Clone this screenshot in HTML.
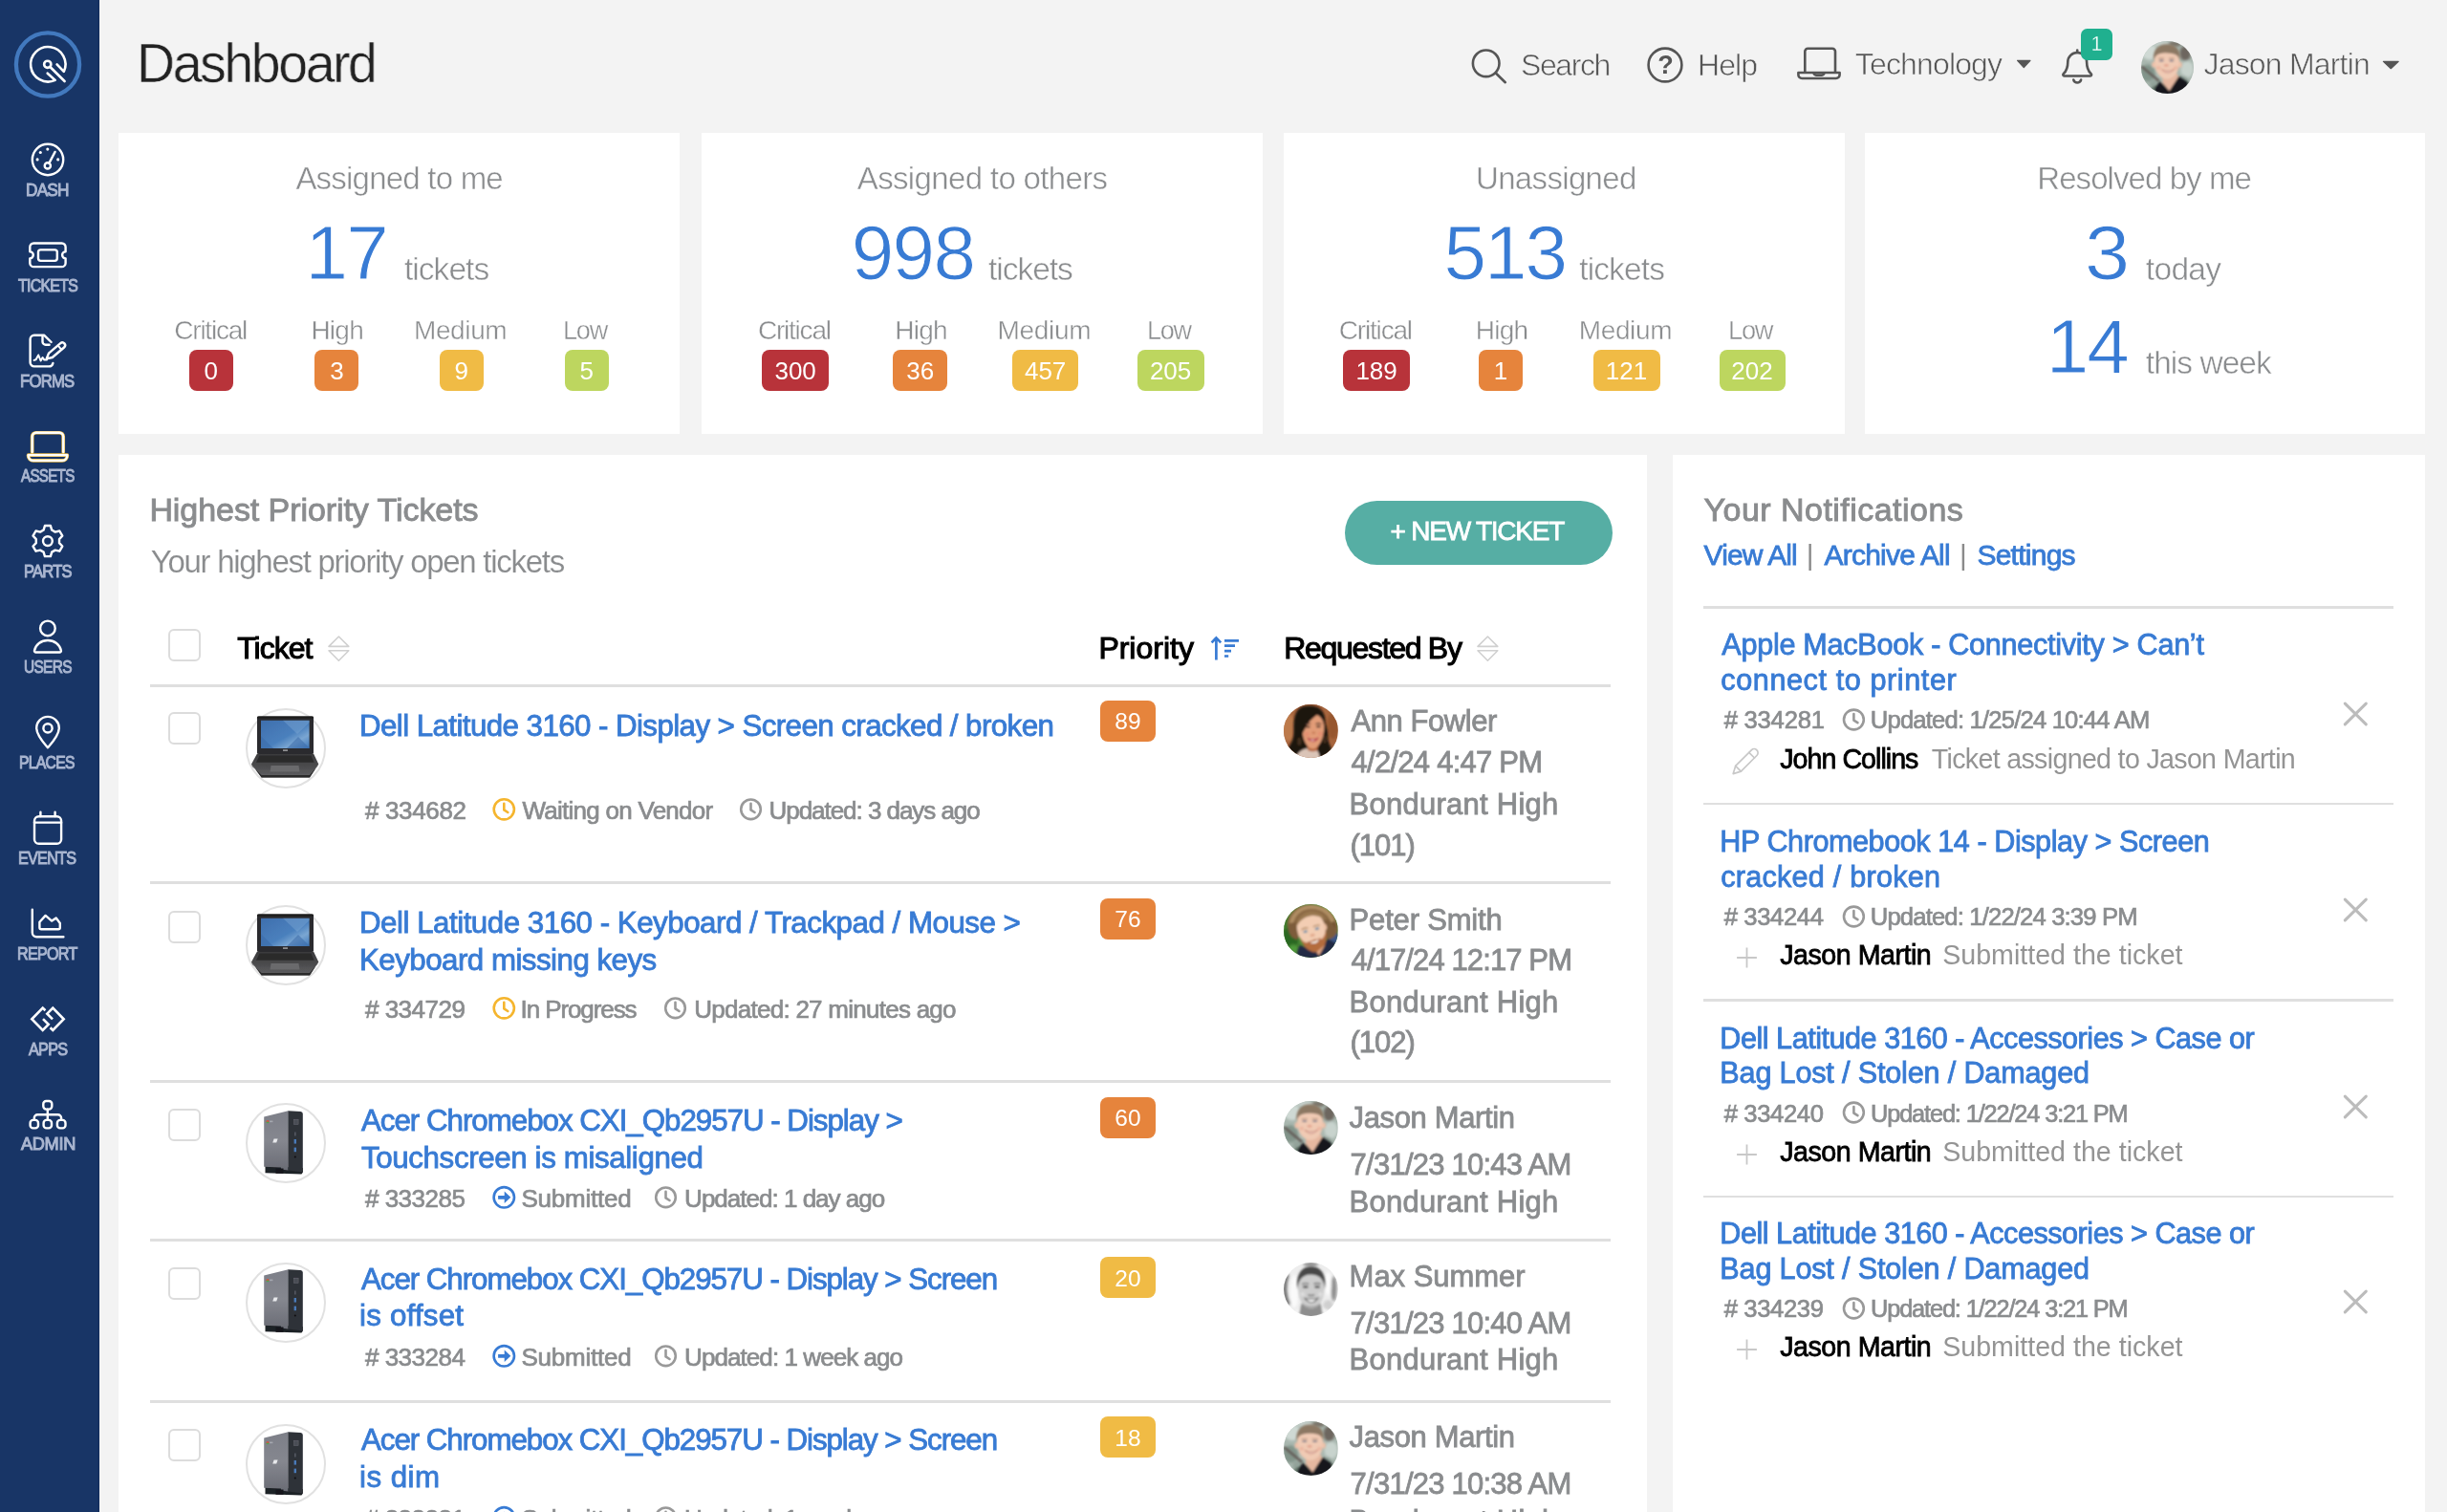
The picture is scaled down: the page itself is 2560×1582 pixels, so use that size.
<!DOCTYPE html>
<html lang="en">
<head>
<meta charset="utf-8">
<title>Dashboard</title>
<style>
html,body{margin:0;padding:0}
body{width:2560px;height:1582px;overflow:hidden;background:#f3f3f3;font-family:"Liberation Sans",sans-serif;position:relative;color:#8b8b8b}
.t{position:absolute;white-space:nowrap;margin:0;padding:0;font-weight:400;text-decoration:none}
.a{position:absolute}
#app{position:absolute;left:0;top:0;width:2560px;height:1582px;overflow:hidden;will-change:transform}
aside,header,section,nav,article,a.nav,div.row,ul,li{position:absolute;display:block;margin:0;padding:0;list-style:none;box-sizing:border-box}
svg{position:absolute;left:0;top:0;overflow:visible}
.sb{-webkit-text-stroke:.027em currentColor}
.lt0{-webkit-text-stroke:.004em #fff}
.sbh{-webkit-text-stroke:.034em currentColor}
.sb2{-webkit-text-stroke:.055em currentColor}
.lt{-webkit-text-stroke:.014em #fff}
.lth{-webkit-text-stroke:.02em #f3f3f3}
.ltb{-webkit-text-stroke:.012em #fff}
.card{background:#fff}
.panel{background:#fff}
.cb{position:absolute;box-sizing:border-box;width:34px;height:34px;border:2px solid #dcdcdc;border-radius:6px;background:#fff}
.hr{position:absolute;height:2.8px;background:#dfdfdf}
.badge{position:absolute;border-radius:8px;color:#fff;text-align:center}
.circ{position:absolute;box-sizing:border-box;border:2.5px solid #e1e1e1;border-radius:50%;background:#fff}
.av{position:absolute;border-radius:50%;overflow:hidden}
</style>
</head>
<body>
<svg width="0" height="0" style="position:absolute"><defs><filter id="b1" x="-20%" y="-20%" width="140%" height="140%"><feGaussianBlur stdDeviation="0.9"/></filter><filter id="b2" x="-20%" y="-20%" width="140%" height="140%"><feGaussianBlur stdDeviation="1.8"/></filter><filter id="b05" x="-20%" y="-20%" width="140%" height="140%"><feGaussianBlur stdDeviation="0.45"/></filter><linearGradient id="scr" x1="0" y1="0" x2="1" y2="1"><stop offset="0" stop-color="#3f6fae"/><stop offset="0.55" stop-color="#4a80bd"/><stop offset="0.75" stop-color="#7aa6d2"/><stop offset="1" stop-color="#3d76b8"/></linearGradient><linearGradient id="cbx" x1="0" y1="0" x2="0" y2="1"><stop offset="0" stop-color="#7d7f88"/><stop offset="0.5" stop-color="#85878f"/><stop offset="1" stop-color="#6a6c75"/></linearGradient><linearGradient id="kb" x1="0" y1="0" x2="0" y2="1"><stop offset="0" stop-color="#3a3a3c"/><stop offset="0.5" stop-color="#4a4a4c"/><stop offset="1" stop-color="#606062"/></linearGradient></defs></svg><div id="app">
<aside style="left:0px;top:0px;width:103.5px;height:1582px;background:#183566;box-shadow:inset -1.5px 0 0 #142f5e;"><a class="nav logo" style="left:0px;top:20px;width:103px;height:100px;"><div class="a" style="left:0px;top:0px;width:103px;height:100px;"><svg width="103" height="100" viewBox="0 20 103 100" ><circle cx="50" cy="67.5" r="33.1" fill="none" stroke="#4279be" stroke-width="4.3"/><g fill="none" stroke="#fff" stroke-width="2.6" stroke-linecap="round" stroke-linejoin="round"><path d="M59.6,67.4 L66.8,74.9 A18.2,18.2 0 1 0 57.7,83.9 L49.7,76.7" stroke-width="2.6"/><circle cx="49.75" cy="67.3" r="3.6" stroke-width="2.6"/><path d="M52.4,70 L67.6,85" stroke-width="2.6"/></g></svg></div></a>
<nav style="left:0px;top:130px;width:103px;height:1100px;"><a class="nav" style="left:0px;top:5px;width:103px;height:99.85px;"><div class="a" style="left:0px;top:0px;width:103px;height:99.85px;"><svg width="103" height="99.85" viewBox="0 135 103 99.85" ><g fill="none" stroke="#fff" stroke-width="2.4" stroke-linecap="round" stroke-linejoin="round"><circle cx="50" cy="167" r="16.2"/><circle cx="49.8" cy="173.4" r="3.1"/><path d="M51.4,170.6 L57.6,158.9"/></g><g fill="#fff"><circle cx="49.8" cy="156.1" r="1.55"/><circle cx="42.3" cy="159.5" r="1.55"/><circle cx="39.1" cy="166.9" r="1.55"/><circle cx="60.7" cy="166.9" r="1.55"/></g></svg></div><span class="t sb2" style="top:54.89px;font-size:18.2px;line-height:18.2px;left:27.35px;transform:scaleX(0.9469);transform-origin:0 0;color:#aab6d0;letter-spacing:-0.82px;">DASH</span></a>
<a class="nav" style="left:0px;top:104.85px;width:103px;height:99.85px;"><div class="a" style="left:0px;top:0px;width:103px;height:99.85px;"><svg width="103" height="99.85" viewBox="0 234.85 103 99.85" ><g fill="none" stroke="#fff" stroke-width="2.4" stroke-linecap="round" stroke-linejoin="round"><path d="M35.3,254.3 H64.6 a4,4 0 0 1 4,4 V263.2 a3.5,3.5 0 0 0 0,7 V275 a4,4 0 0 1 -4,4 H35.3 a4,4 0 0 1 -4,-4 V270.2 a3.5,3.5 0 0 0 0,-7 V258.3 a4,4 0 0 1 4,-4 z"/><rect x="40" y="261.2" width="19.8" height="11.5" rx="2.5"/></g></svg></div><span class="t sb2" style="top:54.89px;font-size:18.2px;line-height:18.2px;left:18.7px;transform:scaleX(0.8738);transform-origin:0 0;color:#aab6d0;letter-spacing:-0.82px;">TICKETS</span></a>
<a class="nav" style="left:0px;top:204.7px;width:103px;height:99.85px;"><div class="a" style="left:0px;top:0px;width:103px;height:99.85px;"><svg width="103" height="99.85" viewBox="0 334.7 103 99.85" ><g fill="none" stroke="#fff" stroke-width="2.4" stroke-linecap="round" stroke-linejoin="round"><path d="M55.4,379.6 a4.4,4.4 0 0 1 -4.4,3.5 H35.8 a4.2,4.2 0 0 1 -4.2,-4.2 V354.7 a4.2,4.2 0 0 1 4.2,-4.2 H46.3 L53.6,357.7"/><path d="M44.5,350.9 V357.2 a3.2,3.2 0 0 0 3.2,3.2 H51.6"/><g transform="translate(48.3,375.4) rotate(-40.5)"><path d="M0.6,0 L6,-2.9 H22.2 a2.9,2.9 0 0 1 0,5.8 H6 Z"/><path d="M18.6,-2.9 V2.9" stroke-width="2"/></g><path d="M35.6,376.6 L37.6,376 L40.2,371.2 L42.6,377.2 L44.6,373.8 L46.4,376.3 H49" stroke-width="2"/></g></svg></div><span class="t sb2" style="top:54.89px;font-size:18.2px;line-height:18.2px;left:21.48px;transform:scaleX(0.9157);transform-origin:0 0;color:#aab6d0;letter-spacing:-0.82px;">FORMS</span></a>
<a class="nav" style="left:0px;top:304.55px;width:103px;height:99.85px;"><div class="a" style="left:0px;top:0px;width:103px;height:99.85px;"><svg width="103" height="99.85" viewBox="0 434.55 103 99.85" ><g fill="none" stroke-linecap="round" stroke-linejoin="round"><g stroke="#f0c04e" stroke-width="3.7"><path d="M33.7,472.6 V456.3 a4,4 0 0 1 4,-4 H62.2 a4,4 0 0 1 4,4 V472.6"/><path d="M29.6,475.7 H70.3 V476.2 a5.2,5.2 0 0 1 -5.2,5.2 H34.8 a5.2,5.2 0 0 1 -5.2,-5.2 Z"/></g><g stroke="#fff" stroke-width="2.3"><path d="M33.7,472.6 V456.3 a4,4 0 0 1 4,-4 H62.2 a4,4 0 0 1 4,4 V472.6"/><path d="M29.6,475.7 H70.3 V476.2 a5.2,5.2 0 0 1 -5.2,5.2 H34.8 a5.2,5.2 0 0 1 -5.2,-5.2 Z"/></g></g></svg></div><span class="t sb2" style="top:54.89px;font-size:18.2px;line-height:18.2px;left:22.2px;transform:scaleX(0.8306);transform-origin:0 0;color:#aab6d0;letter-spacing:-0.82px;">ASSETS</span></a>
<a class="nav" style="left:0px;top:404.4px;width:103px;height:99.85px;"><div class="a" style="left:0px;top:0px;width:103px;height:99.85px;"><svg width="103" height="99.85" viewBox="0 534.4 103 99.85" ><g fill="none" stroke="#fff" stroke-width="2.4" stroke-linecap="round" stroke-linejoin="round"><path d="M45.59,554.98 L46.93,550.47 L52.87,550.47 L54.21,554.98 L57.72,557.01 L62.29,555.91 L65.27,561.06 L62.03,564.47 L62.03,568.53 L65.27,571.94 L62.29,577.09 L57.72,575.99 L54.21,578.02 L52.87,582.53 L46.93,582.53 L45.59,578.02 L42.08,575.99 L37.51,577.09 L34.53,571.94 L37.77,568.53 L37.77,564.47 L34.53,561.06 L37.51,555.91 L42.08,557.01 Z"/><circle cx="49.9" cy="566.5" r="4.9"/></g></svg></div><span class="t sb2" style="top:54.89px;font-size:18.2px;line-height:18.2px;left:24.59px;transform:scaleX(0.9074);transform-origin:0 0;color:#aab6d0;letter-spacing:-0.82px;">PARTS</span></a>
<a class="nav" style="left:0px;top:504.25px;width:103px;height:99.85px;"><div class="a" style="left:0px;top:0px;width:103px;height:99.85px;"><svg width="103" height="99.85" viewBox="0 634.25 103 99.85" ><g fill="none" stroke="#fff" stroke-width="2.4" stroke-linecap="round" stroke-linejoin="round"><circle cx="49.9" cy="657.7" r="7.8"/><path d="M37.6,682.8 H62.3 a1.6,1.6 0 0 0 1.6,-1.9 C62.6,674.6 57,670.2 49.95,670.2 S37.3,674.6 36,680.9 a1.6,1.6 0 0 0 1.6,1.9 Z"/></g></svg></div><span class="t sb2" style="top:54.89px;font-size:18.2px;line-height:18.2px;left:24.65px;transform:scaleX(0.8497);transform-origin:0 0;color:#aab6d0;letter-spacing:-0.82px;">USERS</span></a>
<a class="nav" style="left:0px;top:604.1px;width:103px;height:99.85px;"><div class="a" style="left:0px;top:0px;width:103px;height:99.85px;"><svg width="103" height="99.85" viewBox="0 734.1 103 99.85" ><g fill="none" stroke="#fff" stroke-width="2.4" stroke-linecap="round" stroke-linejoin="round"><path d="M50,782.4 C47,779 38.2,769.5 38.2,761.8 a11.8,11.8 0 0 1 23.6,0 C61.8,769.5 53,779 50,782.4 Z"/><circle cx="50" cy="762" r="4.6"/></g></svg></div><span class="t sb2" style="top:54.89px;font-size:18.2px;line-height:18.2px;left:20.44px;transform:scaleX(0.8625);transform-origin:0 0;color:#aab6d0;letter-spacing:-0.82px;">PLACES</span></a>
<a class="nav" style="left:0px;top:703.95px;width:103px;height:99.85px;"><div class="a" style="left:0px;top:0px;width:103px;height:99.85px;"><svg width="103" height="99.85" viewBox="0 833.95 103 99.85" ><g fill="none" stroke="#fff" stroke-width="2.4" stroke-linecap="round" stroke-linejoin="round"><rect x="36" y="854.2" width="28.1" height="28.5" rx="4.6"/><path d="M36,860.6 H64.1"/><path d="M42.4,849.6 V854"/><path d="M57.6,849.6 V854"/></g></svg></div><span class="t sb2" style="top:54.89px;font-size:18.2px;line-height:18.2px;left:19.11px;transform:scaleX(0.8883);transform-origin:0 0;color:#aab6d0;letter-spacing:-0.82px;">EVENTS</span></a>
<a class="nav" style="left:0px;top:803.8px;width:103px;height:99.85px;"><div class="a" style="left:0px;top:0px;width:103px;height:99.85px;"><svg width="103" height="99.85" viewBox="0 933.8 103 99.85" ><g fill="none" stroke="#fff" stroke-width="2.4" stroke-linecap="round" stroke-linejoin="round"><path d="M33.8,951.6 V975.6 a4.4,4.4 0 0 0 4.4,4.4 H66.4"/><path d="M43.2,972.1 H61 a1.8,1.8 0 0 0 1.8,-1.8 V965.8 L58.7,960.2 L54.2,963.4 L47.6,957.7 L41.4,964.6 V970.3 a1.8,1.8 0 0 0 1.8,1.8 Z"/></g></svg></div><span class="t sb2" style="top:54.89px;font-size:18.2px;line-height:18.2px;left:18.01px;transform:scaleX(0.8868);transform-origin:0 0;color:#aab6d0;letter-spacing:-0.82px;">REPORT</span></a>
<a class="nav" style="left:0px;top:903.65px;width:103px;height:99.85px;"><div class="a" style="left:0px;top:0px;width:103px;height:99.85px;"><svg width="103" height="99.85" viewBox="0 1033.65 103 99.85" ><g fill="none" stroke="#fff" stroke-width="2.6" stroke-linecap="butt" stroke-linejoin="miter"><path d="M47.4,1056.9 L44.7,1054.2 L33.3,1065.9 L44.7,1077.6 L50.7,1071.5 L45,1065.7"/><path d="M52.6,1074.9 L55.3,1077.6 L66.7,1065.9 L55.3,1054.2 L49.3,1060.3 L55,1066.1"/></g></svg></div><span class="t sb2" style="top:54.89px;font-size:18.2px;line-height:18.2px;left:29.5px;transform:scaleX(0.8947);transform-origin:0 0;color:#aab6d0;letter-spacing:-0.82px;">APPS</span></a>
<a class="nav" style="left:0px;top:1003.5px;width:103px;height:99.85px;"><div class="a" style="left:0px;top:0px;width:103px;height:99.85px;"><svg width="103" height="99.85" viewBox="0 1133.5 103 99.85" ><g fill="none" stroke="#fff" stroke-width="2.4" stroke-linecap="round" stroke-linejoin="round"><rect x="45.3" y="1151.5" width="9" height="8.6" rx="3"/><path d="M49.8,1160.1 V1170.2"/><path d="M35.8,1170.2 V1169.3 a3.5,3.5 0 0 1 3.5,-3.5 H60.6 a3.5,3.5 0 0 1 3.5,3.5 V1170.2"/><rect x="31.6" y="1171.4" width="8.4" height="8.5" rx="3"/><rect x="45.6" y="1171.4" width="8.4" height="8.5" rx="3"/><rect x="59.9" y="1171.4" width="8.6" height="8.5" rx="3"/></g></svg></div><span class="t sb2" style="top:54.89px;font-size:18.2px;line-height:18.2px;left:21.9px;color:#aab6d0;letter-spacing:-0.29px;">ADMIN</span></a>
</nav>
</aside>
<header style="left:103px;top:0px;width:2457px;height:139px;"><h1 class="t" style="top:38.43px;font-size:57.5px;line-height:57.5px;left:40.03px;transform:scaleX(0.9668);transform-origin:0 0;color:#222;letter-spacing:-2.59px;-webkit-text-stroke:.01em #f3f3f3;">Dashboard</h1><a class="nav" style="left:1427px;top:40px;width:165px;height:60px;"><div class="a" style="left:0px;top:0px;width:60px;height:60px;"><svg width="60" height="60" viewBox="1530 40 60 60" ><g fill="none" stroke="#555" stroke-width="2.6" stroke-linecap="round" stroke-linejoin="round"><circle cx="1554.7" cy="66.3" r="13.8"/><path d="M1564.6,76.3 L1574.8,86.2"/></g></svg></div><span class="t lth" style="top:11.91px;font-size:32px;line-height:32px;left:61px;color:#555;letter-spacing:-1.42px;">Search</span></a>
<a class="nav" style="left:1612px;top:40px;width:135px;height:60px;"><div class="a" style="left:0px;top:0px;width:60px;height:60px;"><svg width="60" height="60" viewBox="1715 40 60 60" ><g fill="none" stroke="#555" stroke-width="2.6" stroke-linecap="round" stroke-linejoin="round"><circle cx="1742" cy="68" r="17.4"/></g></svg></div><span class="t" style="top:14.74px;font-size:27px;line-height:27px;left:19.2px;font-weight:700;color:#555;">?</span><span class="t lth" style="top:11.91px;font-size:32px;line-height:32px;left:60.9px;color:#555;letter-spacing:-0.87px;">Help</span></a>
<a class="nav" style="left:1769px;top:40px;width:262px;height:60px;"><div class="a" style="left:0px;top:0px;width:70px;height:60px;"><svg width="70" height="60" viewBox="1872 40 70 60" ><g fill="none" stroke="#555" stroke-width="2.6" stroke-linecap="round" stroke-linejoin="round"><path d="M1888.3,75.4 V53.8 a3.1,3.1 0 0 1 3.1,-3.1 H1916.9 a3.1,3.1 0 0 1 3.1,3.1 V75.4"/><path d="M1881.4,76 H1924.6 V78.3 a3.7,3.7 0 0 1 -3.7,3.7 H1885.1 a3.7,3.7 0 0 1 -3.7,-3.7 Z"/><path d="M1897.6,76.2 a2.4,2.4 0 0 0 2.4,2.4 H1906 a2.4,2.4 0 0 0 2.4,-2.4"/></g></svg></div><span class="t lth" style="top:10.51px;font-size:32px;line-height:32px;left:68.8px;color:#555;letter-spacing:-0.85px;">Technology</span><div class="a" style="left:233px;top:15px;width:25px;height:20px;"><svg width="25" height="20" viewBox="2105 55 25 20" ><path d="M2110.6,63.3 H2124 L2117.3,70.6 Z" fill="#555" stroke="#555" stroke-width="1.2" stroke-linejoin="round"/></svg></div></a>
<a class="nav" style="left:2047px;top:25px;width:65px;height:70px;"><div class="a" style="left:0px;top:0px;width:65px;height:70px;"><svg width="65" height="70" viewBox="2150 25 65 70" ><g fill="none" stroke="#555" stroke-width="2.6" stroke-linecap="round" stroke-linejoin="round"><path d="M2173.2,52.6 v2.4"/><path d="M2159.6,79.5 c-1.3,0 -1.7,-1.4 -0.8,-2.3 c2.6,-2.6 4.5,-5 4.5,-12.3 a9.9,9.9 0 0 1 19.8,0 c0,7.3 1.9,9.7 4.5,12.3 c0.9,0.9 0.5,2.3 -0.8,2.3 Z"/><path d="M2169.3,83.6 a4.1,4.1 0 0 0 7.8,0"/></g></svg></div><div class="a" style="left:26.8px;top:4.9px;width:33px;height:33px;background:#20b08f;border-radius:6.5px;"></div><span class="t" style="top:11px;font-size:21.5px;line-height:21.5px;left:37.4px;color:#fff;-webkit-text-stroke:.3px #20b08f;">1</span></a>
<a class="nav" style="left:2132px;top:40px;width:285px;height:62px;"><div class="a av" style="left:4.7px;top:3.4px;width:55px;height:55px;"><svg width="55" height="55" viewBox="0 0 56 56"><rect width="56" height="56" fill="#a9b7af"/><g filter="url(#b2)"><ellipse cx="9" cy="12" rx="9" ry="8" fill="#cfd9d4"/><ellipse cx="7" cy="34" rx="8" ry="9" fill="#82948a"/><ellipse cx="47" cy="13" rx="6" ry="8" fill="#6d665e"/><ellipse cx="49" cy="30" rx="7" ry="9" fill="#c8d3cd"/><ellipse cx="44" cy="42" rx="6" ry="5" fill="#8c9c93"/><ellipse cx="22" cy="3" rx="9" ry="3" fill="#c4cec9"/><ellipse cx="36" cy="3" rx="7" ry="3" fill="#7a746b"/><ellipse cx="16" cy="46" rx="7" ry="5" fill="#93a39a"/></g><g filter="url(#b1)"><path d="M0.5,27 L19,42.5" stroke="#655f5a" stroke-width="2.6"/><path d="M8,56 C9,50 13,47.5 17,47 L40,38 L50,43.5 C53,46 54,50 54,56 Z" fill="#66776c"/><path d="M14,57 C14,51 15,48.5 16.5,47.5 L20,43 L30,52.5 L40,37.5 L49.5,43.5 C50.5,47 50,52 49,57 Z" fill="#14171e"/><path d="M22.5,36 L23,44.5 L30,53 L39.8,38 L38,34 Z" fill="#e6b8a0"/><path d="M14,23 C13.6,14 19,8.5 27.6,8.5 S41.2,14 40.9,23 C40.8,32 35.5,40.4 27.6,40.4 S14.2,32 14,23 Z" fill="#f0cab4"/><ellipse cx="13.2" cy="25.2" rx="1.7" ry="3.1" fill="#eec0a8"/><ellipse cx="41.8" cy="25.2" rx="1.7" ry="3.1" fill="#eec0a8"/><path d="M13.4,21.5 C11.5,9 19,3.2 27.5,3.4 S43,8.5 41.2,21.5 C40.5,16.5 38,12.8 27.4,12.6 S14.6,16 13.4,21.5 Z" fill="#8c7864"/><ellipse cx="21.6" cy="20.8" rx="2.7" ry="1" fill="#7a7888"/><ellipse cx="32.4" cy="20.8" rx="2.7" ry="1" fill="#7a7888"/><path d="M18.5,18.3 h6 M29.5,18.3 h6" stroke="#b08c74" stroke-width="1"/><ellipse cx="26.8" cy="26" rx="2.6" ry="1.5" fill="#e3a590"/><path d="M21.8,30.2 Q28.5,33.6 35.4,30 Q28.5,37.5 21.8,30.2 Z" fill="#f6e6e0" stroke="#c98674" stroke-width="0.9"/><ellipse cx="18.5" cy="28.5" rx="2.6" ry="2" fill="#eab09a" opacity=".7"/><ellipse cx="37" cy="28.5" rx="2.6" ry="2" fill="#eab09a" opacity=".7"/></g></svg></div><span class="t lth" style="top:10.91px;font-size:32px;line-height:32px;left:70.5px;color:#555;letter-spacing:-0.81px;">Jason Martin</span><div class="a" style="left:253px;top:16px;width:25px;height:20px;"><svg width="25" height="20" viewBox="2488 56 25 20" ><path d="M2493.4,64.4 H2509.2 L2501.3,71.7 Z" fill="#555" stroke="#555" stroke-width="1.2" stroke-linejoin="round"/></svg></div></a>
</header>
<section class="cards" style="left:124px;top:139px;width:2413px;height:315px;"><article class="card" style="left:0px;top:0px;width:587px;height:315px;"><h2 class="t lt" style="top:31.37px;font-size:33px;line-height:33px;left:185.4px;color:#8a8c8e;letter-spacing:-0.78px;">Assigned to me</h2><strong class="t ltb" style="top:85.58px;font-size:80px;line-height:80px;left:195.4px;color:#387bd4;letter-spacing:-1.69px;">17</strong><span class="t lt" style="top:125.84px;font-size:33.5px;line-height:33.5px;left:299px;color:#8a8c8e;letter-spacing:-0.96px;">tickets</span><span class="t lt" style="top:192.5px;font-size:28px;line-height:28px;left:58.3px;color:#8a8c8e;letter-spacing:-1.23px;">Critical</span><span class="badge" style="left:74.2px;top:227.3px;width:45.4px;height:42.5px;background:#b8333a;border-radius:8px;"><span class="t" style="top:8.59px;font-size:26px;line-height:26px;left:15.2px;color:#fff;">0</span></span>
<span class="t lt" style="top:192.5px;font-size:28px;line-height:28px;left:201.4px;color:#8a8c8e;letter-spacing:-0.74px;">High</span><span class="badge" style="left:205.4px;top:227.3px;width:45.8px;height:42.5px;background:#e6843c;border-radius:8px;"><span class="t" style="top:8.59px;font-size:26px;line-height:26px;left:15.9px;color:#fff;">3</span></span>
<span class="t lt" style="top:192.5px;font-size:28px;line-height:28px;left:309px;color:#8a8c8e;letter-spacing:-0.39px;">Medium</span><span class="badge" style="left:336px;top:227.3px;width:45.9px;height:42.5px;background:#f0bb45;border-radius:8px;"><span class="t" style="top:8.59px;font-size:26px;line-height:26px;left:15.45px;color:#fff;">9</span></span>
<span class="t lt" style="top:192.5px;font-size:28px;line-height:28px;left:465.07px;transform:scaleX(0.9659);transform-origin:0 0;color:#8a8c8e;letter-spacing:-1.26px;">Low</span><span class="badge" style="left:467px;top:227.3px;width:46px;height:42.5px;background:#bdd65f;border-radius:8px;"><span class="t" style="top:8.59px;font-size:26px;line-height:26px;left:15.5px;color:#fff;">5</span></span>
</article>
<article class="card" style="left:610px;top:0px;width:587px;height:315px;"><h2 class="t lt" style="top:31.37px;font-size:33px;line-height:33px;left:162.8px;color:#8a8c8e;letter-spacing:-0.65px;">Assigned to others</h2><strong class="t ltb" style="top:85.58px;font-size:80px;line-height:80px;left:156.8px;color:#387bd4;letter-spacing:-1.69px;">998</strong><span class="t lt" style="top:125.84px;font-size:33.5px;line-height:33.5px;left:299.9px;color:#8a8c8e;letter-spacing:-1px;">tickets</span><span class="t lt" style="top:192.5px;font-size:28px;line-height:28px;left:59px;color:#8a8c8e;letter-spacing:-1.23px;">Critical</span><span class="badge" style="left:63px;top:227.3px;width:69.8px;height:42.5px;background:#b8333a;border-radius:8px;"><span class="t" style="top:8.59px;font-size:26px;line-height:26px;left:13.44px;color:#fff;">300</span></span>
<span class="t lt" style="top:192.5px;font-size:28px;line-height:28px;left:202.3px;color:#8a8c8e;letter-spacing:-0.74px;">High</span><span class="badge" style="left:200.2px;top:227.3px;width:56.8px;height:42.5px;background:#e6843c;border-radius:8px;"><span class="t" style="top:8.59px;font-size:26px;line-height:26px;left:14.17px;color:#fff;">36</span></span>
<span class="t lt" style="top:192.5px;font-size:28px;line-height:28px;left:309.5px;color:#8a8c8e;letter-spacing:-0.31px;">Medium</span><span class="badge" style="left:324.8px;top:227.3px;width:69.2px;height:42.5px;background:#f0bb45;border-radius:8px;"><span class="t" style="top:8.59px;font-size:26px;line-height:26px;left:13.14px;color:#fff;">457</span></span>
<span class="t lt" style="top:192.5px;font-size:28px;line-height:28px;left:465.77px;transform:scaleX(0.9638);transform-origin:0 0;color:#8a8c8e;letter-spacing:-1.26px;">Low</span><span class="badge" style="left:456px;top:227.3px;width:69.7px;height:42.5px;background:#bdd65f;border-radius:8px;"><span class="t" style="top:8.59px;font-size:26px;line-height:26px;left:12.89px;color:#fff;">205</span></span>
</article>
<article class="card" style="left:1219px;top:0px;width:587px;height:315px;"><h2 class="t lt" style="top:31.37px;font-size:33px;line-height:33px;left:201px;color:#8a8c8e;letter-spacing:-0.66px;">Unassigned</h2><strong class="t ltb" style="top:85.58px;font-size:80px;line-height:80px;left:167.5px;color:#387bd4;letter-spacing:-1.94px;">513</strong><span class="t lt" style="top:125.84px;font-size:33.5px;line-height:33.5px;left:309.2px;color:#8a8c8e;letter-spacing:-0.86px;">tickets</span><span class="t lt" style="top:192.5px;font-size:28px;line-height:28px;left:57.8px;color:#8a8c8e;letter-spacing:-1.18px;">Critical</span><span class="badge" style="left:62.4px;top:227.3px;width:69.9px;height:42.5px;background:#b8333a;border-radius:8px;"><span class="t" style="top:8.59px;font-size:26px;line-height:26px;left:12.99px;color:#fff;">189</span></span>
<span class="t lt" style="top:192.5px;font-size:28px;line-height:28px;left:200.7px;color:#8a8c8e;letter-spacing:-0.74px;">High</span><span class="badge" style="left:204.2px;top:227.3px;width:46.2px;height:42.5px;background:#e6843c;border-radius:8px;"><span class="t" style="top:8.59px;font-size:26px;line-height:26px;left:15.6px;color:#fff;">1</span></span>
<span class="t lt" style="top:192.5px;font-size:28px;line-height:28px;left:308.7px;color:#8a8c8e;letter-spacing:-0.35px;">Medium</span><span class="badge" style="left:323.8px;top:227.3px;width:69.9px;height:42.5px;background:#f0bb45;border-radius:8px;"><span class="t" style="top:8.59px;font-size:26px;line-height:26px;left:12.99px;color:#fff;">121</span></span>
<span class="t lt" style="top:192.5px;font-size:28px;line-height:28px;left:464.56px;transform:scaleX(0.9722);transform-origin:0 0;color:#8a8c8e;letter-spacing:-1.26px;">Low</span><span class="badge" style="left:455.5px;top:227.3px;width:69.4px;height:42.5px;background:#bdd65f;border-radius:8px;"><span class="t" style="top:8.59px;font-size:26px;line-height:26px;left:12.74px;color:#fff;">202</span></span>
</article>
<article class="card" style="left:1827px;top:0px;width:586px;height:315px;"><h2 class="t lt" style="top:31.37px;font-size:33px;line-height:33px;left:180.3px;color:#8a8c8e;letter-spacing:-0.93px;">Resolved by me</h2><strong class="t ltb" style="top:85.58px;font-size:80px;line-height:80px;left:230.33px;transform:scaleX(1.0579);transform-origin:0 0;color:#387bd4;">3</strong><span class="t lt" style="top:125.84px;font-size:33.5px;line-height:33.5px;left:293.8px;color:#8a8c8e;letter-spacing:-0.68px;">today</span><strong class="t ltb" style="top:184.08px;font-size:80px;line-height:80px;left:189.8px;color:#387bd4;letter-spacing:-1.99px;">14</strong><span class="t lt" style="top:224.24px;font-size:33.5px;line-height:33.5px;left:293.8px;color:#8a8c8e;letter-spacing:-0.96px;">this week</span></article>
</section>
<section class="panel" style="left:124px;top:475.5px;width:1599px;height:1110px;"><h2 class="t sb" style="top:40.32px;font-size:34px;line-height:34px;left:32.4px;color:#8a8c8e;letter-spacing:-0.07px;">Highest Priority Tickets</h2><p class="t lt0" style="top:95.67px;font-size:33px;line-height:33px;left:33.7px;color:#8a8c8e;letter-spacing:-1.28px;">Your highest priority open tickets</p><a class="nav" style="left:1283.4px;top:48.6px;width:279.6px;height:66.8px;background:#56aea4;border-radius:34px;"><span class="t sb" style="top:18.3px;font-size:28px;line-height:28px;left:47.2px;color:#fff;letter-spacing:-1.23px;">+ NEW TICKET</span></a>
<div class="row" style="left:33px;top:164.5px;width:1528px;height:79px;"><span class="a cb" style="left:18.5px;top:18.4px;"></span><span class="t sbh" style="top:22.21px;font-size:32px;line-height:32px;left:91.2px;color:#000;letter-spacing:-0.99px;">Ticket</span><div class="a" style="left:185.8px;top:25px;width:23px;height:27px;"><svg width="23" height="27" viewBox="342.8 665 23 27" ><g fill="none" stroke="#d0d0d0" stroke-width="1.6" stroke-linejoin="round"><path d="M354.2,666 L364.6,676.4 H343.8 Z"/><path d="M354.2,691.2 L364.6,680.8 H343.8 Z"/></g></svg></div><span class="t sbh" style="top:22.21px;font-size:32px;line-height:32px;left:992.4px;color:#000;letter-spacing:-0.01px;">Priority</span><div class="a" style="left:1109px;top:24px;width:31px;height:29px;"><svg width="31" height="29" viewBox="1266 664 31 29" ><g fill="none" stroke="#387bd4" stroke-width="2.7" stroke-linecap="butt" stroke-linejoin="miter"><path d="M1272.4,690.6 V667.6 M1267.6,672.4 L1272.4,667.4 L1277.2,672.4"/><path d="M1281,670.3 H1296 M1281,675.7 H1292 M1281,681.1 H1288 M1281,686.5 H1285.2"/></g></svg></div><span class="t sbh" style="top:22.21px;font-size:32px;line-height:32px;left:1186.2px;color:#000;letter-spacing:-1.3px;">Requested By</span><div class="a" style="left:1388.1px;top:24.8px;width:23px;height:27px;"><svg width="23" height="27" viewBox="1545.1 664.8 23 27" ><g fill="none" stroke="#d0d0d0" stroke-width="1.6" stroke-linejoin="round"><path d="M1556.5,665.8 L1566.9,676.2 H1546.1 Z"/><path d="M1556.5,691 L1566.9,680.6 H1546.1 Z"/></g></svg></div><div class="a hr" style="left:0px;top:76.3px;width:1528px;"></div></div>
<div class="row" style="left:33px;top:243.3px;width:1528px;height:205.9px;"><span class="a cb" style="left:18.5px;top:26.5px;"></span><div class="a circ" style="left:99.8px;top:22.2px;width:84px;height:84px;"><svg width="84" height="84" viewBox="0 0 84 84" style="left:-2.5px;top:-2.5px"><g filter="url(#b05)"><path d="M13,48.6 L7,59.6 L17.6,73.4 H68 L77.3,59.6 L72,48.6 Z" fill="url(#kb)"/><path d="M7,59.6 L17.6,73.4 H68 L77.3,59.6 L76,62 L68,71 H17.6 L8,62 Z" fill="#2a2a2b"/><path d="M15.5,50.4 H69.5 L72.6,57.8 H12 Z" fill="#2a2a2c"/><path d="M27.5,61 H56.5 L57.5,67.5 H26.5 Z" fill="#6a6a6c"/><rect x="13" y="9.5" width="59" height="39.6" rx="1.8" fill="#2c2c2e"/><rect x="13" y="9.5" width="59" height="2.2" rx="1" fill="#1c1c1e"/><rect x="17" y="13.8" width="50.6" height="29.2" fill="url(#scr)"/><path d="M17,30 L30,43 H17 Z M44,43 L56,31 L67.6,42.5 V43 Z" fill="#3a6aa8" opacity=".55"/><path d="M40,13.8 L55,28 L67.6,16 V13.8 Z" fill="#8ab2da" opacity=".35"/><rect x="40" y="44.3" width="5" height="1.6" fill="#9a9a9c"/></g></svg></div><a class="t sb" style="top:20.85px;font-size:31.3px;line-height:39px;left:219px;color:#387bd4;letter-spacing:-0.58px;">Dell Latitude 3160 - Display &gt; Screen cracked / broken</a><span class="t sb" style="top:116.59px;font-size:26px;line-height:26px;left:225px;color:#8a8c8e;letter-spacing:-0.35px;"># 334682</span><div class="a" style="left:357px;top:115.6px;width:27px;height:27px;"><svg width="27" height="27" viewBox="514 834.4 27 27" ><g fill="none" stroke="#f5b52e" stroke-width="2.6" stroke-linecap="round" stroke-linejoin="round"><circle cx="527.3" cy="847.2" r="10.6"/><path d="M527.3,841.2 V847.8 L531.3,850.4"/></g></svg></div><span class="t sb" style="top:116.59px;font-size:26px;line-height:26px;left:389.5px;color:#8a8c8e;letter-spacing:-0.74px;">Waiting on Vendor</span><div class="a" style="left:616.8px;top:115.6px;width:27px;height:27px;"><svg width="27" height="27" viewBox="773.8 834.4 27 27" ><g fill="none" stroke="#999" stroke-width="2.6" stroke-linecap="round" stroke-linejoin="round"><circle cx="785.3" cy="847.2" r="10.3"/><path d="M785.3,841.2 V847.8 L789.3,850.4"/></g></svg></div><span class="t sb" style="top:116.59px;font-size:26px;line-height:26px;left:647.5px;color:#8a8c8e;letter-spacing:-1.04px;">Updated: 3 days ago</span><span class="badge" style="left:994.3px;top:14.4px;width:57.7px;height:42.4px;background:#e6843c;border-radius:8px;"><span class="t" style="top:10.06px;font-size:24.5px;line-height:24.5px;left:15.04px;color:#fff;">89</span></span>
<div class="a av" style="left:1186.2px;top:18.1px;width:56.5px;height:56.5px;"><svg width="56.5" height="56.5" viewBox="0 0 56 56"><rect width="56" height="56" fill="#a8663e"/><g filter="url(#b2)"><ellipse cx="5" cy="24" rx="7" ry="14" fill="#bd7a4c"/><ellipse cx="51" cy="22" rx="6" ry="14" fill="#96562f"/><ellipse cx="28" cy="1" rx="18" ry="3" fill="#9a5a36"/><ellipse cx="6" cy="46" rx="5" ry="5" fill="#9c5c38"/></g><g filter="url(#b1)"><path d="M19,2.4 C27,0.5 36,1.4 40,7 C43.5,12 43,18 44,28 C44.5,36 47,40 49.5,46 L46,52 L38,57 H12 L4,48 C5,42 10,40 10.3,30 C10.5,22 9,7 19,2.4 Z" fill="#1e1310"/><path d="M13,57 C13.5,49 20,45.6 27,45.4 S37,48 37.5,57 Z" fill="#dac4b7"/><path d="M24,38 H36 L35,47.5 Q30,50 25,47.5 Z" fill="#b5683f"/><path d="M19.4,27 C19.4,17 24,10.5 31,10.5 S42,16.5 41.8,25 C41.6,35 36.5,46 30.2,46 S19.4,36 19.4,27 Z" fill="#e29c77"/><path d="M18,33 C14,22 18,7 30,5 C38,4 43,9 42.5,18 C41,12.5 38.5,9 37.8,8.5 C33,12 27.5,16 24.5,21 C22,25 20,29 18,33 Z" fill="#1e1310"/><path d="M41,17 C43,22 43.5,30 42,38 L46,42 C46.5,32 45,20 41,17 Z" fill="#1e1310"/><path d="M24.6,35 Q30.5,38 36,34.6 Q30.5,42 24.6,35 Z" fill="#fff5f0" stroke="#b8414b" stroke-width="1.2"/><ellipse cx="25.2" cy="23.4" rx="2.5" ry="1" fill="#3d2a24"/><ellipse cx="36" cy="23" rx="2.5" ry="1" fill="#3d2a24"/><path d="M22,20.8 q3,-1.6 6,-0.4 M33,20.4 q3,-1.4 6,0" stroke="#3d2a24" stroke-width="1" fill="none"/><ellipse cx="31" cy="29.5" rx="2" ry="1.2" fill="#c97d5a"/><ellipse cx="24" cy="31" rx="2.8" ry="2.2" fill="#e58a70" opacity=".7"/><ellipse cx="38" cy="30.5" rx="2.4" ry="2.2" fill="#e58a70" opacity=".7"/><ellipse cx="16.2" cy="38.5" rx="1.2" ry="3.6" fill="none" stroke="#7a5a34" stroke-width=".7"/><ellipse cx="42.6" cy="36" rx="1.2" ry="3.6" fill="none" stroke="#7a5a34" stroke-width=".7"/></g></svg></div><span class="t sb" style="top:20.56px;font-size:31px;line-height:31px;left:1256.6px;color:#8a8c8e;letter-spacing:-0.46px;">Ann Fowler</span><span class="t sb" style="top:63.66px;font-size:31px;line-height:31px;left:1256.6px;color:#8a8c8e;letter-spacing:-0.75px;">4/2/24 4:47 PM</span><span class="t sb" style="top:107.36px;font-size:31px;line-height:31px;left:1254.6px;color:#8a8c8e;letter-spacing:0.25px;">Bondurant High</span><span class="t sb" style="top:150.16px;font-size:31px;line-height:31px;left:1255.6px;color:#8a8c8e;letter-spacing:-1.06px;">(101)</span><div class="a hr" style="left:0px;top:203.5px;width:1528px;"></div></div>
<div class="row" style="left:33px;top:449.2px;width:1528px;height:207.8px;"><span class="a cb" style="left:18.5px;top:28px;"></span><div class="a circ" style="left:99.8px;top:22.6px;width:84px;height:84px;"><svg width="84" height="84" viewBox="0 0 84 84" style="left:-2.5px;top:-2.5px"><g filter="url(#b05)"><path d="M13,48.6 L7,59.6 L17.6,73.4 H68 L77.3,59.6 L72,48.6 Z" fill="url(#kb)"/><path d="M7,59.6 L17.6,73.4 H68 L77.3,59.6 L76,62 L68,71 H17.6 L8,62 Z" fill="#2a2a2b"/><path d="M15.5,50.4 H69.5 L72.6,57.8 H12 Z" fill="#2a2a2c"/><path d="M27.5,61 H56.5 L57.5,67.5 H26.5 Z" fill="#6a6a6c"/><rect x="13" y="9.5" width="59" height="39.6" rx="1.8" fill="#2c2c2e"/><rect x="13" y="9.5" width="59" height="2.2" rx="1" fill="#1c1c1e"/><rect x="17" y="13.8" width="50.6" height="29.2" fill="url(#scr)"/><path d="M17,30 L30,43 H17 Z M44,43 L56,31 L67.6,42.5 V43 Z" fill="#3a6aa8" opacity=".55"/><path d="M40,13.8 L55,28 L67.6,16 V13.8 Z" fill="#8ab2da" opacity=".35"/><rect x="40" y="44.3" width="5" height="1.6" fill="#9a9a9c"/></g></svg></div><a class="t sb" style="top:21.35px;font-size:31.3px;line-height:39px;left:219px;color:#387bd4;letter-spacing:-0.49px;">Dell Latitude 3160 - Keyboard / Trackpad / Mouse &gt;<br><span style="letter-spacing:-0.53px;margin-left:0px">Keyboard missing keys</span></a><span class="t sb" style="top:118.09px;font-size:26px;line-height:26px;left:225px;color:#8a8c8e;letter-spacing:-0.51px;"># 334729</span><div class="a" style="left:357px;top:117.1px;width:27px;height:27px;"><svg width="27" height="27" viewBox="514 1041.8 27 27" ><g fill="none" stroke="#f5b52e" stroke-width="2.6" stroke-linecap="round" stroke-linejoin="round"><circle cx="527.3" cy="1054.6" r="10.6"/><path d="M527.3,1048.6 V1055.2 L531.3,1057.8"/></g></svg></div><span class="t sb" style="top:118.09px;font-size:26px;line-height:26px;left:387.5px;color:#8a8c8e;letter-spacing:-1.09px;">In Progress</span><div class="a" style="left:537.9px;top:117.1px;width:27px;height:27px;"><svg width="27" height="27" viewBox="694.9 1041.8 27 27" ><g fill="none" stroke="#999" stroke-width="2.6" stroke-linecap="round" stroke-linejoin="round"><circle cx="706.4" cy="1054.6" r="10.3"/><path d="M706.4,1048.6 V1055.2 L710.4,1057.8"/></g></svg></div><span class="t sb" style="top:118.09px;font-size:26px;line-height:26px;left:569.3px;color:#8a8c8e;letter-spacing:-0.74px;">Updated: 27 minutes ago</span><span class="badge" style="left:994.3px;top:14.9px;width:57.7px;height:43.4px;background:#e6843c;border-radius:8px;"><span class="t" style="top:10.56px;font-size:24.5px;line-height:24.5px;left:15.04px;color:#fff;">76</span></span>
<div class="a av" style="left:1186.2px;top:21.1px;width:56.5px;height:56.5px;"><svg width="56.5" height="56.5" viewBox="0 0 56 56"><rect width="56" height="56" fill="#4c8834"/><g filter="url(#b2)"><ellipse cx="6" cy="38" rx="9" ry="14" fill="#2c6824"/><ellipse cx="49" cy="8" rx="9" ry="8" fill="#8fc05c"/><ellipse cx="3" cy="18" rx="5" ry="7" fill="#3c7a2c"/><ellipse cx="10" cy="46" rx="5" ry="4" fill="#4f9a3a"/></g><g filter="url(#b1)"><path d="M13.5,57 C14,49 15,44 17,42.5 L36,50 L47.5,33 L55,29 C58,36 58,48 56,57 Z" fill="#242c44"/><path d="M46,36 L55,29.5 C57,33 57.5,38 57,42 Z" fill="#3b5686"/><path d="M4,22 C3,10 14,0.3 27,0.2 C42,0 55,9 56,24 C56.5,30 52,35 47.5,33.5 L44,26 L14,34 L11.5,36 C6,34 4.5,28 4,22 Z" fill="#8a6843"/><path d="M8,20 C10,8 20,3 29,3 C40,3 50,10 52,22" stroke="#b08e64" stroke-width="4" fill="none"/><path d="M6,26 C7,30 9,33 12,35 M51,18 C54,22 54,28 49,32" stroke="#6a4a2c" stroke-width="2.5" fill="none"/><path d="M40,14 C48,16 56,22 54,31 C51,37 45,38 42,34 C40,28 39,20 40,14 Z" fill="#7d5c3a"/><path d="M5,20 C3,28 8,36 14,37 C17,33 16,24 15,18 Z" fill="#7d5c3a"/><g transform="rotate(-13 28 28)"><path d="M14.5,26 C14.5,15 20.5,9.5 29,9.5 S43.5,15 43.5,26 C43.5,38 37.5,49 29.5,49 S14.5,38 14.5,26 Z" fill="#f3cdb3"/><path d="M15.5,31 C16.5,43 22.5,50.5 30,50.5 C37.5,50.5 43,42 43.5,30 C41.5,36 38,39.5 34.5,38.5 L30,37 L24,38.5 C19.5,39.5 17,36 15.5,31 Z" fill="#b46c3c"/><path d="M22.8,38.6 Q29.5,39.6 36,37.6 Q30,45.5 22.8,38.6 Z" fill="#fffaf0" stroke="#a85a38" stroke-width=".9"/><ellipse cx="22.5" cy="27.2" rx="2.3" ry="1.1" fill="#4b83a6"/><ellipse cx="35" cy="27" rx="2.3" ry="1.1" fill="#4b83a6"/><path d="M19,24.4 q3.5,-1.6 7,-0.2 M31.5,24.2 q3.5,-1.6 7,0" stroke="#a57c54" stroke-width="1.1" fill="none"/><ellipse cx="28.8" cy="32.5" rx="2.6" ry="1.5" fill="#e2a98c"/><ellipse cx="43.6" cy="27" rx="1.6" ry="3.2" fill="#efc2a6"/></g><path d="M13,24 C13,13 22,6.5 31,7.5 C38,8.5 43,12.5 44.5,18 C40,13.5 35,11.5 29.5,12 C22,12.7 16.5,17 13,24 Z" fill="#9a7850"/><path d="M34,49.5 L36.5,53.5 L43,42 Z" fill="#dfa583"/></g></svg></div><span class="t sb" style="top:21.86px;font-size:31px;line-height:31px;left:1254.6px;color:#8a8c8e;letter-spacing:-0.18px;">Peter Smith</span><span class="t sb" style="top:64.76px;font-size:31px;line-height:31px;left:1256.6px;color:#8a8c8e;letter-spacing:-0.89px;">4/17/24 12:17 PM</span><span class="t sb" style="top:107.86px;font-size:31px;line-height:31px;left:1254.6px;color:#8a8c8e;letter-spacing:0.25px;">Bondurant High</span><span class="t sb" style="top:150.76px;font-size:31px;line-height:31px;left:1255.6px;color:#8a8c8e;letter-spacing:-1.06px;">(102)</span><div class="a hr" style="left:0px;top:205.4px;width:1528px;"></div></div>
<div class="row" style="left:33px;top:657px;width:1528px;height:166.3px;"><span class="a cb" style="left:18.5px;top:27.5px;"></span><div class="a circ" style="left:99.8px;top:21.9px;width:84px;height:84px;"><svg width="84" height="84" viewBox="0 0 84 84" style="left:-2.5px;top:-2.5px"><g filter="url(#b05)"><path d="M21.5,66 V73.2 L59.4,74.6 L60.8,72.8 V68 Z" fill="#1f2126"/><path d="M20.2,14.6 L45.6,8.2 V70.4 L38,69.6 V67.6 L20.2,66.8 Z" fill="url(#cbx)"/><path d="M45.4,8.2 L58.5,9 Q60.8,9.2 60.8,11.6 V72.6 L45.4,70.4 Z" fill="#2e3138"/><path d="M32.5,68.5 H40.5 V73.8 H32.5 Z" fill="#15161a"/><rect x="51.5" y="17.2" width="4.6" height="5.2" fill="#4a4d55" stroke="#6a6d75" stroke-width=".5"/><rect x="52" y="30.5" width="1.6" height="4" fill="#555962"/><rect x="51.6" y="38" width="2.4" height="4.6" fill="#4a7ab8"/><rect x="51.6" y="46.6" width="2.4" height="4.6" fill="#4a7ab8"/><circle cx="52.8" cy="56.6" r="1" fill="#0c0d10"/><path d="M29.2,41.4 L30.6,37.6 H34.6 L33.2,41.4 Z" fill="#e8e9ec"/><circle cx="24" cy="19.6" r="1.5" fill="#d8503e"/><path d="M22.5,19.8 a1.5,1.5 0 0 0 3,0 Z" fill="#4caa50"/><rect x="26" y="18.6" width="3.4" height="1.6" fill="#a5a7ae"/></g></svg></div><a class="t sb" style="top:20.7px;font-size:31.3px;line-height:39.3px;left:221px;color:#387bd4;letter-spacing:-1.02px;">Acer Chromebox CXI_Qb2957U - Display &gt;<br><span style="letter-spacing:-0.38px;margin-left:0px">Touchscreen is misaligned</span></a><span class="t sb" style="top:108.49px;font-size:26px;line-height:26px;left:225px;color:#8a8c8e;letter-spacing:-0.51px;"># 333285</span><div class="a" style="left:357px;top:107.5px;width:27px;height:27px;"><svg width="27" height="27" viewBox="514 1240 27 27" ><circle cx="527.3" cy="1252.8" r="10.7" fill="none" stroke="#387bd4" stroke-width="2.6"/><path d="M521.1,1250.9 H527.7 V1246.6 L534.3,1252.8 L527.7,1259 V1254.7 H521.1 Z" fill="#387bd4"/></svg></div><span class="t sb" style="top:108.49px;font-size:26px;line-height:26px;left:388.5px;color:#8a8c8e;letter-spacing:-0.24px;">Submitted</span><div class="a" style="left:527.7px;top:107.5px;width:27px;height:27px;"><svg width="27" height="27" viewBox="684.7 1240 27 27" ><g fill="none" stroke="#999" stroke-width="2.6" stroke-linecap="round" stroke-linejoin="round"><circle cx="696.2" cy="1252.8" r="10.3"/><path d="M696.2,1246.8 V1253.4 L700.2,1256"/></g></svg></div><span class="t sb" style="top:108.49px;font-size:26px;line-height:26px;left:559.1px;color:#8a8c8e;letter-spacing:-0.99px;">Updated: 1 day ago</span><span class="badge" style="left:994.3px;top:15.2px;width:57.7px;height:43.1px;background:#e6843c;border-radius:8px;"><span class="t" style="top:10.41px;font-size:24.5px;line-height:24.5px;left:15.04px;color:#fff;">60</span></span>
<div class="a av" style="left:1186.2px;top:19.2px;width:56.5px;height:56.5px;"><svg width="56.5" height="56.5" viewBox="0 0 56 56"><rect width="56" height="56" fill="#a9b7af"/><g filter="url(#b2)"><ellipse cx="9" cy="12" rx="9" ry="8" fill="#cfd9d4"/><ellipse cx="7" cy="34" rx="8" ry="9" fill="#82948a"/><ellipse cx="47" cy="13" rx="6" ry="8" fill="#6d665e"/><ellipse cx="49" cy="30" rx="7" ry="9" fill="#c8d3cd"/><ellipse cx="44" cy="42" rx="6" ry="5" fill="#8c9c93"/><ellipse cx="22" cy="3" rx="9" ry="3" fill="#c4cec9"/><ellipse cx="36" cy="3" rx="7" ry="3" fill="#7a746b"/><ellipse cx="16" cy="46" rx="7" ry="5" fill="#93a39a"/></g><g filter="url(#b1)"><path d="M0.5,27 L19,42.5" stroke="#655f5a" stroke-width="2.6"/><path d="M8,56 C9,50 13,47.5 17,47 L40,38 L50,43.5 C53,46 54,50 54,56 Z" fill="#66776c"/><path d="M14,57 C14,51 15,48.5 16.5,47.5 L20,43 L30,52.5 L40,37.5 L49.5,43.5 C50.5,47 50,52 49,57 Z" fill="#14171e"/><path d="M22.5,36 L23,44.5 L30,53 L39.8,38 L38,34 Z" fill="#e6b8a0"/><path d="M14,23 C13.6,14 19,8.5 27.6,8.5 S41.2,14 40.9,23 C40.8,32 35.5,40.4 27.6,40.4 S14.2,32 14,23 Z" fill="#f0cab4"/><ellipse cx="13.2" cy="25.2" rx="1.7" ry="3.1" fill="#eec0a8"/><ellipse cx="41.8" cy="25.2" rx="1.7" ry="3.1" fill="#eec0a8"/><path d="M13.4,21.5 C11.5,9 19,3.2 27.5,3.4 S43,8.5 41.2,21.5 C40.5,16.5 38,12.8 27.4,12.6 S14.6,16 13.4,21.5 Z" fill="#8c7864"/><ellipse cx="21.6" cy="20.8" rx="2.7" ry="1" fill="#7a7888"/><ellipse cx="32.4" cy="20.8" rx="2.7" ry="1" fill="#7a7888"/><path d="M18.5,18.3 h6 M29.5,18.3 h6" stroke="#b08c74" stroke-width="1"/><ellipse cx="26.8" cy="26" rx="2.6" ry="1.5" fill="#e3a590"/><path d="M21.8,30.2 Q28.5,33.6 35.4,30 Q28.5,37.5 21.8,30.2 Z" fill="#f6e6e0" stroke="#c98674" stroke-width="0.9"/><ellipse cx="18.5" cy="28.5" rx="2.6" ry="2" fill="#eab09a" opacity=".7"/><ellipse cx="37" cy="28.5" rx="2.6" ry="2" fill="#eab09a" opacity=".7"/></g></svg></div><span class="t sb" style="top:21.26px;font-size:31px;line-height:31px;left:1254.5px;color:#8a8c8e;letter-spacing:-0.35px;">Jason Martin</span><span class="t sb" style="top:70.26px;font-size:31px;line-height:31px;left:1255.6px;color:#8a8c8e;letter-spacing:-0.76px;">7/31/23 10:43 AM</span><span class="t sb" style="top:109.16px;font-size:31px;line-height:31px;left:1254.6px;color:#8a8c8e;letter-spacing:0.25px;">Bondurant High</span><div class="a hr" style="left:0px;top:163.9px;width:1528px;"></div></div>
<div class="row" style="left:33px;top:823.3px;width:1528px;height:168.5px;"><span class="a cb" style="left:18.5px;top:27.4px;"></span><div class="a circ" style="left:99.8px;top:22.2px;width:84px;height:84px;"><svg width="84" height="84" viewBox="0 0 84 84" style="left:-2.5px;top:-2.5px"><g filter="url(#b05)"><path d="M21.5,66 V73.2 L59.4,74.6 L60.8,72.8 V68 Z" fill="#1f2126"/><path d="M20.2,14.6 L45.6,8.2 V70.4 L38,69.6 V67.6 L20.2,66.8 Z" fill="url(#cbx)"/><path d="M45.4,8.2 L58.5,9 Q60.8,9.2 60.8,11.6 V72.6 L45.4,70.4 Z" fill="#2e3138"/><path d="M32.5,68.5 H40.5 V73.8 H32.5 Z" fill="#15161a"/><rect x="51.5" y="17.2" width="4.6" height="5.2" fill="#4a4d55" stroke="#6a6d75" stroke-width=".5"/><rect x="52" y="30.5" width="1.6" height="4" fill="#555962"/><rect x="51.6" y="38" width="2.4" height="4.6" fill="#4a7ab8"/><rect x="51.6" y="46.6" width="2.4" height="4.6" fill="#4a7ab8"/><circle cx="52.8" cy="56.6" r="1" fill="#0c0d10"/><path d="M29.2,41.4 L30.6,37.6 H34.6 L33.2,41.4 Z" fill="#e8e9ec"/><circle cx="24" cy="19.6" r="1.5" fill="#d8503e"/><path d="M22.5,19.8 a1.5,1.5 0 0 0 3,0 Z" fill="#4caa50"/><rect x="26" y="18.6" width="3.4" height="1.6" fill="#a5a7ae"/></g></svg></div><a class="t sb" style="top:20.85px;font-size:31.3px;line-height:38.6px;left:221px;color:#387bd4;letter-spacing:-1.05px;">Acer Chromebox CXI_Qb2957U - Display &gt; Screen<br><span style="letter-spacing:0.21px;margin-left:-2px">is offset</span></a><span class="t sb" style="top:108.29px;font-size:26px;line-height:26px;left:225px;color:#8a8c8e;letter-spacing:-0.51px;"># 333284</span><div class="a" style="left:357px;top:107.3px;width:27px;height:27px;"><svg width="27" height="27" viewBox="514 1406.1 27 27" ><circle cx="527.3" cy="1418.9" r="10.7" fill="none" stroke="#387bd4" stroke-width="2.6"/><path d="M521.1,1417 H527.7 V1412.7 L534.3,1418.9 L527.7,1425.1 V1420.8 H521.1 Z" fill="#387bd4"/></svg></div><span class="t sb" style="top:108.29px;font-size:26px;line-height:26px;left:388.5px;color:#8a8c8e;letter-spacing:-0.24px;">Submitted</span><div class="a" style="left:527.7px;top:107.3px;width:27px;height:27px;"><svg width="27" height="27" viewBox="684.7 1406.1 27 27" ><g fill="none" stroke="#999" stroke-width="2.6" stroke-linecap="round" stroke-linejoin="round"><circle cx="696.2" cy="1418.9" r="10.3"/><path d="M696.2,1412.9 V1419.5 L700.2,1422.1"/></g></svg></div><span class="t sb" style="top:108.29px;font-size:26px;line-height:26px;left:559.1px;color:#8a8c8e;letter-spacing:-0.93px;">Updated: 1 week ago</span><span class="badge" style="left:994.3px;top:16.3px;width:57.7px;height:43.2px;background:#f0bb45;border-radius:8px;"><span class="t" style="top:10.46px;font-size:24.5px;line-height:24.5px;left:15.04px;color:#fff;">20</span></span>
<div class="a av" style="left:1186.2px;top:22.2px;width:56.5px;height:56.5px;"><svg width="56.5" height="56.5" viewBox="0 0 56 56"><rect width="56" height="56" fill="#ededed"/><g filter="url(#b2)"><path d="M3.5,12 C0,22 0,34 5,44" stroke="#777" stroke-width="5" fill="none"/><ellipse cx="52" cy="27" rx="3" ry="13" fill="#8d8d8d"/><ellipse cx="11" cy="30" rx="4.5" ry="17" fill="#fafafa"/><ellipse cx="46" cy="22" rx="3.5" ry="12" fill="#fdfdfd"/><ellipse cx="28" cy="2" rx="8" ry="2.2" fill="#8a8a8a"/><ellipse cx="46" cy="44" rx="5" ry="5" fill="#cfcfcf"/></g><g filter="url(#b1)"><path d="M4,57 C7,50.5 14,48 20,47.5 L37,47.5 C43,48 50,50.5 53,57 Z" fill="#f4f4f4"/><path d="M18.5,42 L38,42 L40.5,53 C34,58.5 23,58.5 16,53 Z" fill="#8e8e8e"/><path d="M15,27 C15,17 20,11 28.5,11 S42,17 42,27 C42,38.5 36.5,47.6 28.5,47.6 S15,38.5 15,27 Z" fill="#cdcdcd"/><path d="M20,42 C23,46.5 34,46.5 37,42 C34,48.5 23,48.5 20,42 Z" fill="#9c9c9c"/><path d="M14.4,28 C12,12 19,4 28.5,4.2 C38,4 45,12 42.6,28 C42,20.5 39.5,12.6 28.5,12.4 S15,20.5 14.4,28 Z" fill="#474747"/><ellipse cx="22.6" cy="25.2" rx="3" ry="1.2" fill="#4e4e4e"/><ellipse cx="34.8" cy="25.2" rx="3" ry="1.2" fill="#4e4e4e"/><path d="M19,22.4 q3.5,-1.6 7,-0.2 M31.2,22.2 q3.5,-1.6 7,0" stroke="#5c5c5c" stroke-width="1.2" fill="none"/><path d="M25.2,33.4 q3.3,1.6 6.6,0" stroke="#7a7a7a" stroke-width="1.6" fill="none"/><path d="M22,37.2 Q28.8,38.6 35.4,37 Q29,45.6 22,37.2 Z" fill="#fbfbfb" stroke="#5e5e5e" stroke-width="1.1"/><ellipse cx="19.5" cy="33" rx="2.4" ry="2.4" fill="#dcdcdc"/><ellipse cx="38" cy="33" rx="2.4" ry="2.4" fill="#dcdcdc"/></g></svg></div><span class="t sb" style="top:21.16px;font-size:31px;line-height:31px;left:1254.6px;color:#8a8c8e;letter-spacing:-0.03px;">Max Summer</span><span class="t sb" style="top:69.86px;font-size:31px;line-height:31px;left:1255.6px;color:#8a8c8e;letter-spacing:-0.76px;">7/31/23 10:40 AM</span><span class="t sb" style="top:108.66px;font-size:31px;line-height:31px;left:1254.6px;color:#8a8c8e;letter-spacing:0.25px;">Bondurant High</span><div class="a hr" style="left:0px;top:166.1px;width:1528px;"></div></div>
<div class="row" style="left:33px;top:991.8px;width:1528px;height:173.7px;"><span class="a cb" style="left:18.5px;top:28px;"></span><div class="a circ" style="left:99.8px;top:22.9px;width:84px;height:84px;"><svg width="84" height="84" viewBox="0 0 84 84" style="left:-2.5px;top:-2.5px"><g filter="url(#b05)"><path d="M21.5,66 V73.2 L59.4,74.6 L60.8,72.8 V68 Z" fill="#1f2126"/><path d="M20.2,14.6 L45.6,8.2 V70.4 L38,69.6 V67.6 L20.2,66.8 Z" fill="url(#cbx)"/><path d="M45.4,8.2 L58.5,9 Q60.8,9.2 60.8,11.6 V72.6 L45.4,70.4 Z" fill="#2e3138"/><path d="M32.5,68.5 H40.5 V73.8 H32.5 Z" fill="#15161a"/><rect x="51.5" y="17.2" width="4.6" height="5.2" fill="#4a4d55" stroke="#6a6d75" stroke-width=".5"/><rect x="52" y="30.5" width="1.6" height="4" fill="#555962"/><rect x="51.6" y="38" width="2.4" height="4.6" fill="#4a7ab8"/><rect x="51.6" y="46.6" width="2.4" height="4.6" fill="#4a7ab8"/><circle cx="52.8" cy="56.6" r="1" fill="#0c0d10"/><path d="M29.2,41.4 L30.6,37.6 H34.6 L33.2,41.4 Z" fill="#e8e9ec"/><circle cx="24" cy="19.6" r="1.5" fill="#d8503e"/><path d="M22.5,19.8 a1.5,1.5 0 0 0 3,0 Z" fill="#4caa50"/><rect x="26" y="18.6" width="3.4" height="1.6" fill="#a5a7ae"/></g></svg></div><a class="t sb" style="top:20.6px;font-size:31.3px;line-height:38.9px;left:221px;color:#387bd4;letter-spacing:-1.05px;">Acer Chromebox CXI_Qb2957U - Display &gt; Screen<br><span style="letter-spacing:0.47px;margin-left:-2px">is dim</span></a><span class="t sb" style="top:108.99px;font-size:26px;line-height:26px;left:225px;color:#8a8c8e;letter-spacing:-0.51px;"># 333281</span><div class="a" style="left:357px;top:108px;width:27px;height:27px;"><svg width="27" height="27" viewBox="514 1575.3 27 27" ><circle cx="527.3" cy="1588.1" r="10.7" fill="none" stroke="#387bd4" stroke-width="2.6"/><path d="M521.1,1586.2 H527.7 V1581.9 L534.3,1588.1 L527.7,1594.3 V1590 H521.1 Z" fill="#387bd4"/></svg></div><span class="t sb" style="top:108.99px;font-size:26px;line-height:26px;left:388.5px;color:#8a8c8e;letter-spacing:-0.24px;">Submitted</span><div class="a" style="left:527.7px;top:108px;width:27px;height:27px;"><svg width="27" height="27" viewBox="684.7 1575.3 27 27" ><g fill="none" stroke="#999" stroke-width="2.6" stroke-linecap="round" stroke-linejoin="round"><circle cx="696.2" cy="1588.1" r="10.3"/><path d="M696.2,1582.1 V1588.7 L700.2,1591.3"/></g></svg></div><span class="t sb" style="top:108.99px;font-size:26px;line-height:26px;left:559.1px;color:#8a8c8e;letter-spacing:-0.93px;">Updated: 1 week ago</span><span class="badge" style="left:994.3px;top:14.6px;width:57.7px;height:43.5px;background:#f0bb45;border-radius:8px;"><span class="t" style="top:10.61px;font-size:24.5px;line-height:24.5px;left:15.04px;color:#fff;">18</span></span>
<div class="a av" style="left:1186.2px;top:20px;width:56.5px;height:56.5px;"><svg width="56.5" height="56.5" viewBox="0 0 56 56"><rect width="56" height="56" fill="#a9b7af"/><g filter="url(#b2)"><ellipse cx="9" cy="12" rx="9" ry="8" fill="#cfd9d4"/><ellipse cx="7" cy="34" rx="8" ry="9" fill="#82948a"/><ellipse cx="47" cy="13" rx="6" ry="8" fill="#6d665e"/><ellipse cx="49" cy="30" rx="7" ry="9" fill="#c8d3cd"/><ellipse cx="44" cy="42" rx="6" ry="5" fill="#8c9c93"/><ellipse cx="22" cy="3" rx="9" ry="3" fill="#c4cec9"/><ellipse cx="36" cy="3" rx="7" ry="3" fill="#7a746b"/><ellipse cx="16" cy="46" rx="7" ry="5" fill="#93a39a"/></g><g filter="url(#b1)"><path d="M0.5,27 L19,42.5" stroke="#655f5a" stroke-width="2.6"/><path d="M8,56 C9,50 13,47.5 17,47 L40,38 L50,43.5 C53,46 54,50 54,56 Z" fill="#66776c"/><path d="M14,57 C14,51 15,48.5 16.5,47.5 L20,43 L30,52.5 L40,37.5 L49.5,43.5 C50.5,47 50,52 49,57 Z" fill="#14171e"/><path d="M22.5,36 L23,44.5 L30,53 L39.8,38 L38,34 Z" fill="#e6b8a0"/><path d="M14,23 C13.6,14 19,8.5 27.6,8.5 S41.2,14 40.9,23 C40.8,32 35.5,40.4 27.6,40.4 S14.2,32 14,23 Z" fill="#f0cab4"/><ellipse cx="13.2" cy="25.2" rx="1.7" ry="3.1" fill="#eec0a8"/><ellipse cx="41.8" cy="25.2" rx="1.7" ry="3.1" fill="#eec0a8"/><path d="M13.4,21.5 C11.5,9 19,3.2 27.5,3.4 S43,8.5 41.2,21.5 C40.5,16.5 38,12.8 27.4,12.6 S14.6,16 13.4,21.5 Z" fill="#8c7864"/><ellipse cx="21.6" cy="20.8" rx="2.7" ry="1" fill="#7a7888"/><ellipse cx="32.4" cy="20.8" rx="2.7" ry="1" fill="#7a7888"/><path d="M18.5,18.3 h6 M29.5,18.3 h6" stroke="#b08c74" stroke-width="1"/><ellipse cx="26.8" cy="26" rx="2.6" ry="1.5" fill="#e3a590"/><path d="M21.8,30.2 Q28.5,33.6 35.4,30 Q28.5,37.5 21.8,30.2 Z" fill="#f6e6e0" stroke="#c98674" stroke-width="0.9"/><ellipse cx="18.5" cy="28.5" rx="2.6" ry="2" fill="#eab09a" opacity=".7"/><ellipse cx="37" cy="28.5" rx="2.6" ry="2" fill="#eab09a" opacity=".7"/></g></svg></div><span class="t sb" style="top:20.96px;font-size:31px;line-height:31px;left:1254.5px;color:#8a8c8e;letter-spacing:-0.35px;">Jason Martin</span><span class="t sb" style="top:69.76px;font-size:31px;line-height:31px;left:1255.6px;color:#8a8c8e;letter-spacing:-0.76px;">7/31/23 10:38 AM</span><span class="t sb" style="top:108.66px;font-size:31px;line-height:31px;left:1254.6px;color:#8a8c8e;letter-spacing:0.25px;">Bondurant High</span></div>
</section>
<section class="panel" style="left:1750px;top:475.5px;width:787px;height:1110px;"><h2 class="t sb" style="top:40.12px;font-size:34px;line-height:34px;left:32.6px;color:#8a8c8e;letter-spacing:0.46px;">Your Notifications</h2><a class="t sb" style="top:90.5px;font-size:30px;line-height:30px;left:32.6px;color:#387bd4;letter-spacing:-0.91px;">View All</a><span class="t" style="top:90.5px;font-size:30px;line-height:30px;left:139.8px;color:#8b8b8b;">|</span><a class="t sb" style="top:90.5px;font-size:30px;line-height:30px;left:158.6px;color:#387bd4;letter-spacing:-0.8px;">Archive All</a><span class="t" style="top:90.5px;font-size:30px;line-height:30px;left:300px;color:#8b8b8b;">|</span><a class="t sb" style="top:90.5px;font-size:30px;line-height:30px;left:318.4px;color:#387bd4;letter-spacing:-0.74px;">Settings</a><div class="a hr" style="left:32px;top:158.6px;width:722px;"></div><article class="row" style="left:32px;top:161px;width:722px;height:205px;"><a class="t sb" style="top:19.95px;font-size:30.6px;line-height:36.9px;left:19.3px;color:#387bd4;letter-spacing:-0.28px;">Apple MacBook - Connectivity &gt; Can’t<br><span style="letter-spacing:0.59px;margin-left:-1px">connect to printer</span></a><span class="t sb" style="top:104.93px;font-size:25.6px;line-height:25.6px;left:21.7px;color:#8a8c8e;letter-spacing:-0.22px;"># 334281</span><div class="a" style="left:144px;top:103.6px;width:27px;height:27px;"><svg width="27" height="27" viewBox="1926 740.1 27 27" ><g fill="none" stroke="#999" stroke-width="2.6" stroke-linecap="round" stroke-linejoin="round"><circle cx="1939.4" cy="753.1" r="10.4"/><path d="M1939.4,747.1 V753.7 L1943.4,756.3"/></g></svg></div><span class="t sb" style="top:104.93px;font-size:25.6px;line-height:25.6px;left:174.8px;color:#8a8c8e;letter-spacing:-0.8px;">Updated: 1/25/24 10:44 AM</span><div class="a" style="left:668px;top:96px;width:28px;height:28px;"><svg width="28" height="28" viewBox="2450 732.5 28 28" ><path d="M2453.3,735.6 L2475.3,757.4 M2475.3,735.6 L2453.3,757.4" stroke="#bcbcbc" stroke-width="3.1" stroke-linecap="round" fill="none"/></svg></div><div class="a" style="left:28px;top:142.6px;width:34px;height:34px;"><svg width="34" height="34" viewBox="1810 779.1 34 34" ><g fill="none" stroke="#c8c8c8" stroke-width="1.7" stroke-linejoin="round" stroke-linecap="round" transform="translate(1813.2,809.7) rotate(-45)"><path d="M0,0 L7.5,-4 H31 a4,4 0 0 1 0,8 H7.5 Z"/><path d="M7.5,-4 V4"/><path d="M27.5,-4 V4"/></g></svg></div><strong class="t sb" style="top:143.39px;font-size:28.6px;line-height:28.6px;left:80.3px;color:#000;letter-spacing:-0.97px;">John Collins</strong><span class="t" style="top:143.39px;font-size:28.6px;line-height:28.6px;left:238.8px;color:#949494;letter-spacing:-0.67px;">Ticket assigned to Jason Martin</span><div class="a hr" style="left:0px;top:203.1px;width:722px;"></div></article>
<article class="row" style="left:32px;top:366.5px;width:722px;height:205px;"><a class="t sb" style="top:19.95px;font-size:30.6px;line-height:36.9px;left:17.3px;color:#387bd4;letter-spacing:-0.44px;">HP Chromebook 14 - Display &gt; Screen<br><span style="letter-spacing:0.23px;margin-left:1px">cracked / broken</span></a><span class="t sb" style="top:104.93px;font-size:25.6px;line-height:25.6px;left:21.7px;color:#8a8c8e;letter-spacing:-0.36px;"># 334244</span><div class="a" style="left:144px;top:103.6px;width:27px;height:27px;"><svg width="27" height="27" viewBox="1926 945.6 27 27" ><g fill="none" stroke="#999" stroke-width="2.6" stroke-linecap="round" stroke-linejoin="round"><circle cx="1939.4" cy="958.6" r="10.4"/><path d="M1939.4,952.6 V959.2 L1943.4,961.8"/></g></svg></div><span class="t sb" style="top:104.93px;font-size:25.6px;line-height:25.6px;left:174.8px;color:#8a8c8e;letter-spacing:-0.83px;">Updated: 1/22/24 3:39 PM</span><div class="a" style="left:668px;top:96px;width:28px;height:28px;"><svg width="28" height="28" viewBox="2450 938 28 28" ><path d="M2453.3,941.1 L2475.3,962.9 M2475.3,941.1 L2453.3,962.9" stroke="#bcbcbc" stroke-width="3.1" stroke-linecap="round" fill="none"/></svg></div><div class="a" style="left:33px;top:148.3px;width:25px;height:25px;"><svg width="25" height="25" viewBox="1815 990.3 25 25" ><path d="M1817.1,1002.3 H1837.9 M1827.5,991.9 V1012.7" stroke="#c8c8c8" stroke-width="1.8" fill="none"/></svg></div><strong class="t sb" style="top:143.39px;font-size:28.6px;line-height:28.6px;left:80.3px;color:#000;letter-spacing:-0.48px;">Jason Martin</strong><span class="t" style="top:143.39px;font-size:28.6px;line-height:28.6px;left:250.2px;color:#949494;letter-spacing:0.01px;">Submitted the ticket</span><div class="a hr" style="left:0px;top:203.1px;width:722px;"></div></article>
<article class="row" style="left:32px;top:572.1px;width:722px;height:205px;"><a class="t sb" style="top:19.95px;font-size:30.6px;line-height:36.9px;left:17.3px;color:#387bd4;letter-spacing:-0.48px;">Dell Latitude 3160 - Accessories &gt; Case or<br><span style="letter-spacing:-0.17px;margin-left:0px">Bag Lost / Stolen / Damaged</span></a><span class="t sb" style="top:104.93px;font-size:25.6px;line-height:25.6px;left:21.7px;color:#8a8c8e;letter-spacing:-0.36px;"># 334240</span><div class="a" style="left:144px;top:103.6px;width:27px;height:27px;"><svg width="27" height="27" viewBox="1926 1151.2 27 27" ><g fill="none" stroke="#999" stroke-width="2.6" stroke-linecap="round" stroke-linejoin="round"><circle cx="1939.4" cy="1164.2" r="10.4"/><path d="M1939.4,1158.2 V1164.8 L1943.4,1167.4"/></g></svg></div><span class="t sb" style="top:104.93px;font-size:25.6px;line-height:25.6px;left:174.81px;transform:scaleX(0.9904);transform-origin:0 0;color:#8a8c8e;letter-spacing:-1.15px;">Updated: 1/22/24 3:21 PM</span><div class="a" style="left:668px;top:96px;width:28px;height:28px;"><svg width="28" height="28" viewBox="2450 1143.6 28 28" ><path d="M2453.3,1146.7 L2475.3,1168.5 M2475.3,1146.7 L2453.3,1168.5" stroke="#bcbcbc" stroke-width="3.1" stroke-linecap="round" fill="none"/></svg></div><div class="a" style="left:33px;top:148.3px;width:25px;height:25px;"><svg width="25" height="25" viewBox="1815 1195.9 25 25" ><path d="M1817.1,1207.9 H1837.9 M1827.5,1197.5 V1218.3" stroke="#c8c8c8" stroke-width="1.8" fill="none"/></svg></div><strong class="t sb" style="top:143.39px;font-size:28.6px;line-height:28.6px;left:80.3px;color:#000;letter-spacing:-0.48px;">Jason Martin</strong><span class="t" style="top:143.39px;font-size:28.6px;line-height:28.6px;left:250.2px;color:#949494;letter-spacing:0.01px;">Submitted the ticket</span><div class="a hr" style="left:0px;top:203.1px;width:722px;"></div></article>
<article class="row" style="left:32px;top:776.5px;width:722px;height:205px;"><a class="t sb" style="top:19.95px;font-size:30.6px;line-height:36.9px;left:17.3px;color:#387bd4;letter-spacing:-0.48px;">Dell Latitude 3160 - Accessories &gt; Case or<br><span style="letter-spacing:-0.17px;margin-left:0px">Bag Lost / Stolen / Damaged</span></a><span class="t sb" style="top:104.93px;font-size:25.6px;line-height:25.6px;left:21.7px;color:#8a8c8e;letter-spacing:-0.36px;"># 334239</span><div class="a" style="left:144px;top:103.6px;width:27px;height:27px;"><svg width="27" height="27" viewBox="1926 1355.6 27 27" ><g fill="none" stroke="#999" stroke-width="2.6" stroke-linecap="round" stroke-linejoin="round"><circle cx="1939.4" cy="1368.6" r="10.4"/><path d="M1939.4,1362.6 V1369.2 L1943.4,1371.8"/></g></svg></div><span class="t sb" style="top:104.93px;font-size:25.6px;line-height:25.6px;left:174.81px;transform:scaleX(0.9904);transform-origin:0 0;color:#8a8c8e;letter-spacing:-1.15px;">Updated: 1/22/24 3:21 PM</span><div class="a" style="left:668px;top:96px;width:28px;height:28px;"><svg width="28" height="28" viewBox="2450 1348 28 28" ><path d="M2453.3,1351.1 L2475.3,1372.9 M2475.3,1351.1 L2453.3,1372.9" stroke="#bcbcbc" stroke-width="3.1" stroke-linecap="round" fill="none"/></svg></div><div class="a" style="left:33px;top:148.3px;width:25px;height:25px;"><svg width="25" height="25" viewBox="1815 1400.3 25 25" ><path d="M1817.1,1412.3 H1837.9 M1827.5,1401.9 V1422.7" stroke="#c8c8c8" stroke-width="1.8" fill="none"/></svg></div><strong class="t sb" style="top:143.39px;font-size:28.6px;line-height:28.6px;left:80.3px;color:#000;letter-spacing:-0.48px;">Jason Martin</strong><span class="t" style="top:143.39px;font-size:28.6px;line-height:28.6px;left:250.2px;color:#949494;letter-spacing:0.01px;">Submitted the ticket</span></article>
</section>
</div>
</body>
</html>
